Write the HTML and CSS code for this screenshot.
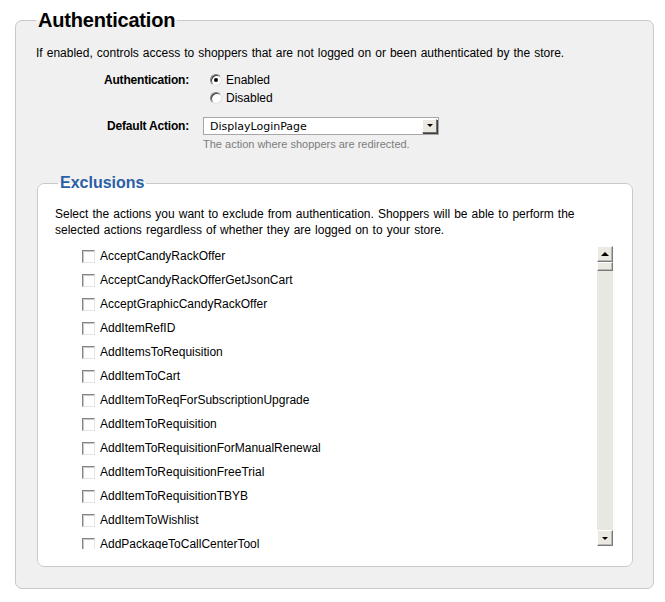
FILE: index.html
```html
<!DOCTYPE html>
<html>
<head>
<meta charset="utf-8">
<link rel="stylesheet" href="styles.css">
</head>
<body>
<div class="page">
  <fieldset class="auth">
    <legend class="auth-legend">Authentication</legend>
    <p class="desc">If enabled, controls access to shoppers that are not logged on or been authenticated by the store.</p>
    <div class="form">
      <div class="label">Authentication:</div>
      <div class="radios">
        <label class="radio-row"><span class="radio checked"></span>Enabled</label>
        <label class="radio-row"><span class="radio"></span>Disabled</label>
      </div>
      <div class="label label-select">Default Action:</div>
      <div class="select-col">
        <div class="select">
          <span class="select-text">DisplayLoginPage</span>
          <span class="select-btn"><span class="tri-down"></span></span>
        </div>
        <div class="hint">The action where shoppers are redirected.</div>
      </div>
    </div>

    <fieldset class="excl">
      <legend class="excl-legend">Exclusions</legend>
      <p class="excl-desc">Select the actions you want to exclude from authentication. Shoppers will be able to perform the selected actions regardless of whether they are logged on to your store.</p>
      <div class="listbox">
        <ul class="list">
          <li><span class="cb"></span>AcceptCandyRackOffer</li>
          <li><span class="cb"></span>AcceptCandyRackOfferGetJsonCart</li>
          <li><span class="cb"></span>AcceptGraphicCandyRackOffer</li>
          <li><span class="cb"></span>AddItemRefID</li>
          <li><span class="cb"></span>AddItemsToRequisition</li>
          <li><span class="cb"></span>AddItemToCart</li>
          <li><span class="cb"></span>AddItemToReqForSubscriptionUpgrade</li>
          <li><span class="cb"></span>AddItemToRequisition</li>
          <li><span class="cb"></span>AddItemToRequisitionForManualRenewal</li>
          <li><span class="cb"></span>AddItemToRequisitionFreeTrial</li>
          <li><span class="cb"></span>AddItemToRequisitionTBYB</li>
          <li><span class="cb"></span>AddItemToWishlist</li>
          <li><span class="cb"></span>AddPackageToCallCenterTool</li>
        </ul>
        <div class="scrollbar">
          <div class="sb-btn"><span class="tri-up"></span></div>
          <div class="sb-thumb"></div>
          <div class="sb-track"></div>
          <div class="sb-btn"><span class="tri-down"></span></div>
        </div>
      </div>
    </fieldset>
  </fieldset>
</div>
</body>
</html>
```

FILE: styles.css
```css
* { box-sizing: border-box; }
html, body { margin: 0; padding: 0; background: #fff; }
body {
  font-family: "Liberation Sans", Arial, sans-serif;
  font-size: 12px;
  color: #000;
}
.page {
  padding: 8px 11px 14px 15px;
}
.auth {
  margin: 0;
  border: 1px solid #c9c9c9;
  border-radius: 7px;
  background: #f0f0f0;
  padding: 14px 20px 21px 20px;
  min-width: 0;
}
.auth-legend {
  font-size: 20px;
  font-weight: bold;
  line-height: 24px;
  padding: 0 2px;
  letter-spacing: -0.2px;
}
.desc {
  margin: 0;
  line-height: 15px;
  word-spacing: 0.7px;
}
.form {
  display: grid;
  grid-template-columns: 153px 1fr;
  column-gap: 14px;
  margin-top: 10px;
}
.label {
  font-weight: bold;
  text-align: right;
  line-height: 18px;
  letter-spacing: -0.2px;
}
.label-select { margin-top: 10px; }
.radios { display: flex; flex-direction: column; }
.radio-row {
  display: flex;
  align-items: center;
  height: 18px;
  padding-left: 7px;
}
.radio {
  width: 12px;
  height: 12px;
  border-radius: 50%;
  border: 1px solid;
  border-color: #7b7b7b #e2e2e2 #e2e2e2 #7b7b7b;
  background: #fff;
  margin-right: 4px;
  display: flex;
  align-items: center;
  justify-content: center;
  box-shadow: inset 1px 1px 0 #404040;
}
.radio.checked::after {
  content: "";
  width: 4px;
  height: 4px;
  border-radius: 50%;
  background: #000;
}
.select-col { margin-top: 10px; }
.select {
  width: 236px;
  height: 18px;
  border: 1px solid #a7a7a7;
  background: #fff;
  display: flex;
  align-items: center;
  justify-content: space-between;
  padding: 0 1px 0 6px;
}
.select-text {
  font-family: "DejaVu Sans", Verdana, sans-serif;
  font-size: 11px;
}
.select-btn {
  width: 15px;
  height: 14px;
  background: #ece9e3;
  border: 1px solid;
  border-color: #fff #6f6f6f #6f6f6f #fff;
  box-shadow: 1px 1px 0 #404040;
  display: flex;
  align-items: center;
  justify-content: center;
  margin-top: -1px;
}
.tri-down {
  width: 0; height: 0;
  border-left: 3px solid transparent;
  border-right: 3px solid transparent;
  border-top: 3px solid #000;
}
.tri-up {
  width: 0; height: 0;
  border-left: 4px solid transparent;
  border-right: 4px solid transparent;
  border-bottom: 4px solid #000;
}
.hint {
  font-size: 11px;
  color: #7c7c7c;
  line-height: 16px;
  margin-top: 1px;
}
.excl {
  margin: 21px 0 0 1px;
  border: 1px solid #c9c9c9;
  border-radius: 7px;
  background: #fff;
  padding: 13px 19px 17px 17px;
  min-width: 0;
}
.excl-legend {
  font-size: 16px;
  font-weight: bold;
  color: #2b5fa6;
  line-height: 20px;
  padding: 0 2px;
  margin-left: 3px;
}
.excl-desc {
  margin: 0;
  line-height: 16px;
  word-spacing: 0.75px;
}
.listbox {
  display: flex;
  margin-top: 6px;
  height: 305px;
}
.list {
  list-style: none;
  margin: 0;
  padding: 0 0 0 27px;
  flex: 1;
  overflow: hidden;
}
.list li {
  height: 24px;
  display: flex;
  align-items: center;
}
.cb {
  width: 13px;
  height: 13px;
  border: 1px solid;
  border-color: #858585 #e4e4e4 #e4e4e4 #858585;
  background: #fff;
  box-shadow: inset 1px 1px 0 #c8c8c8;
  margin-right: 5px;
  flex: none;
}
.scrollbar {
  width: 16px;
  margin-top: 2px;
  height: 300px;
  display: flex;
  flex-direction: column;
  background: #e8e8e3;
}
.sb-btn, .sb-thumb {
  height: 16px;
  background: #ece9e3;
  border: 1px solid;
  border-color: #fff #7a7a7a #7a7a7a #fff;
  box-shadow: inset -1px -1px 0 #b8b8b8;
  display: flex;
  align-items: center;
  justify-content: center;
  flex: none;
}
.sb-thumb { height: 9px; }
.sb-track { flex: 1; }
```
